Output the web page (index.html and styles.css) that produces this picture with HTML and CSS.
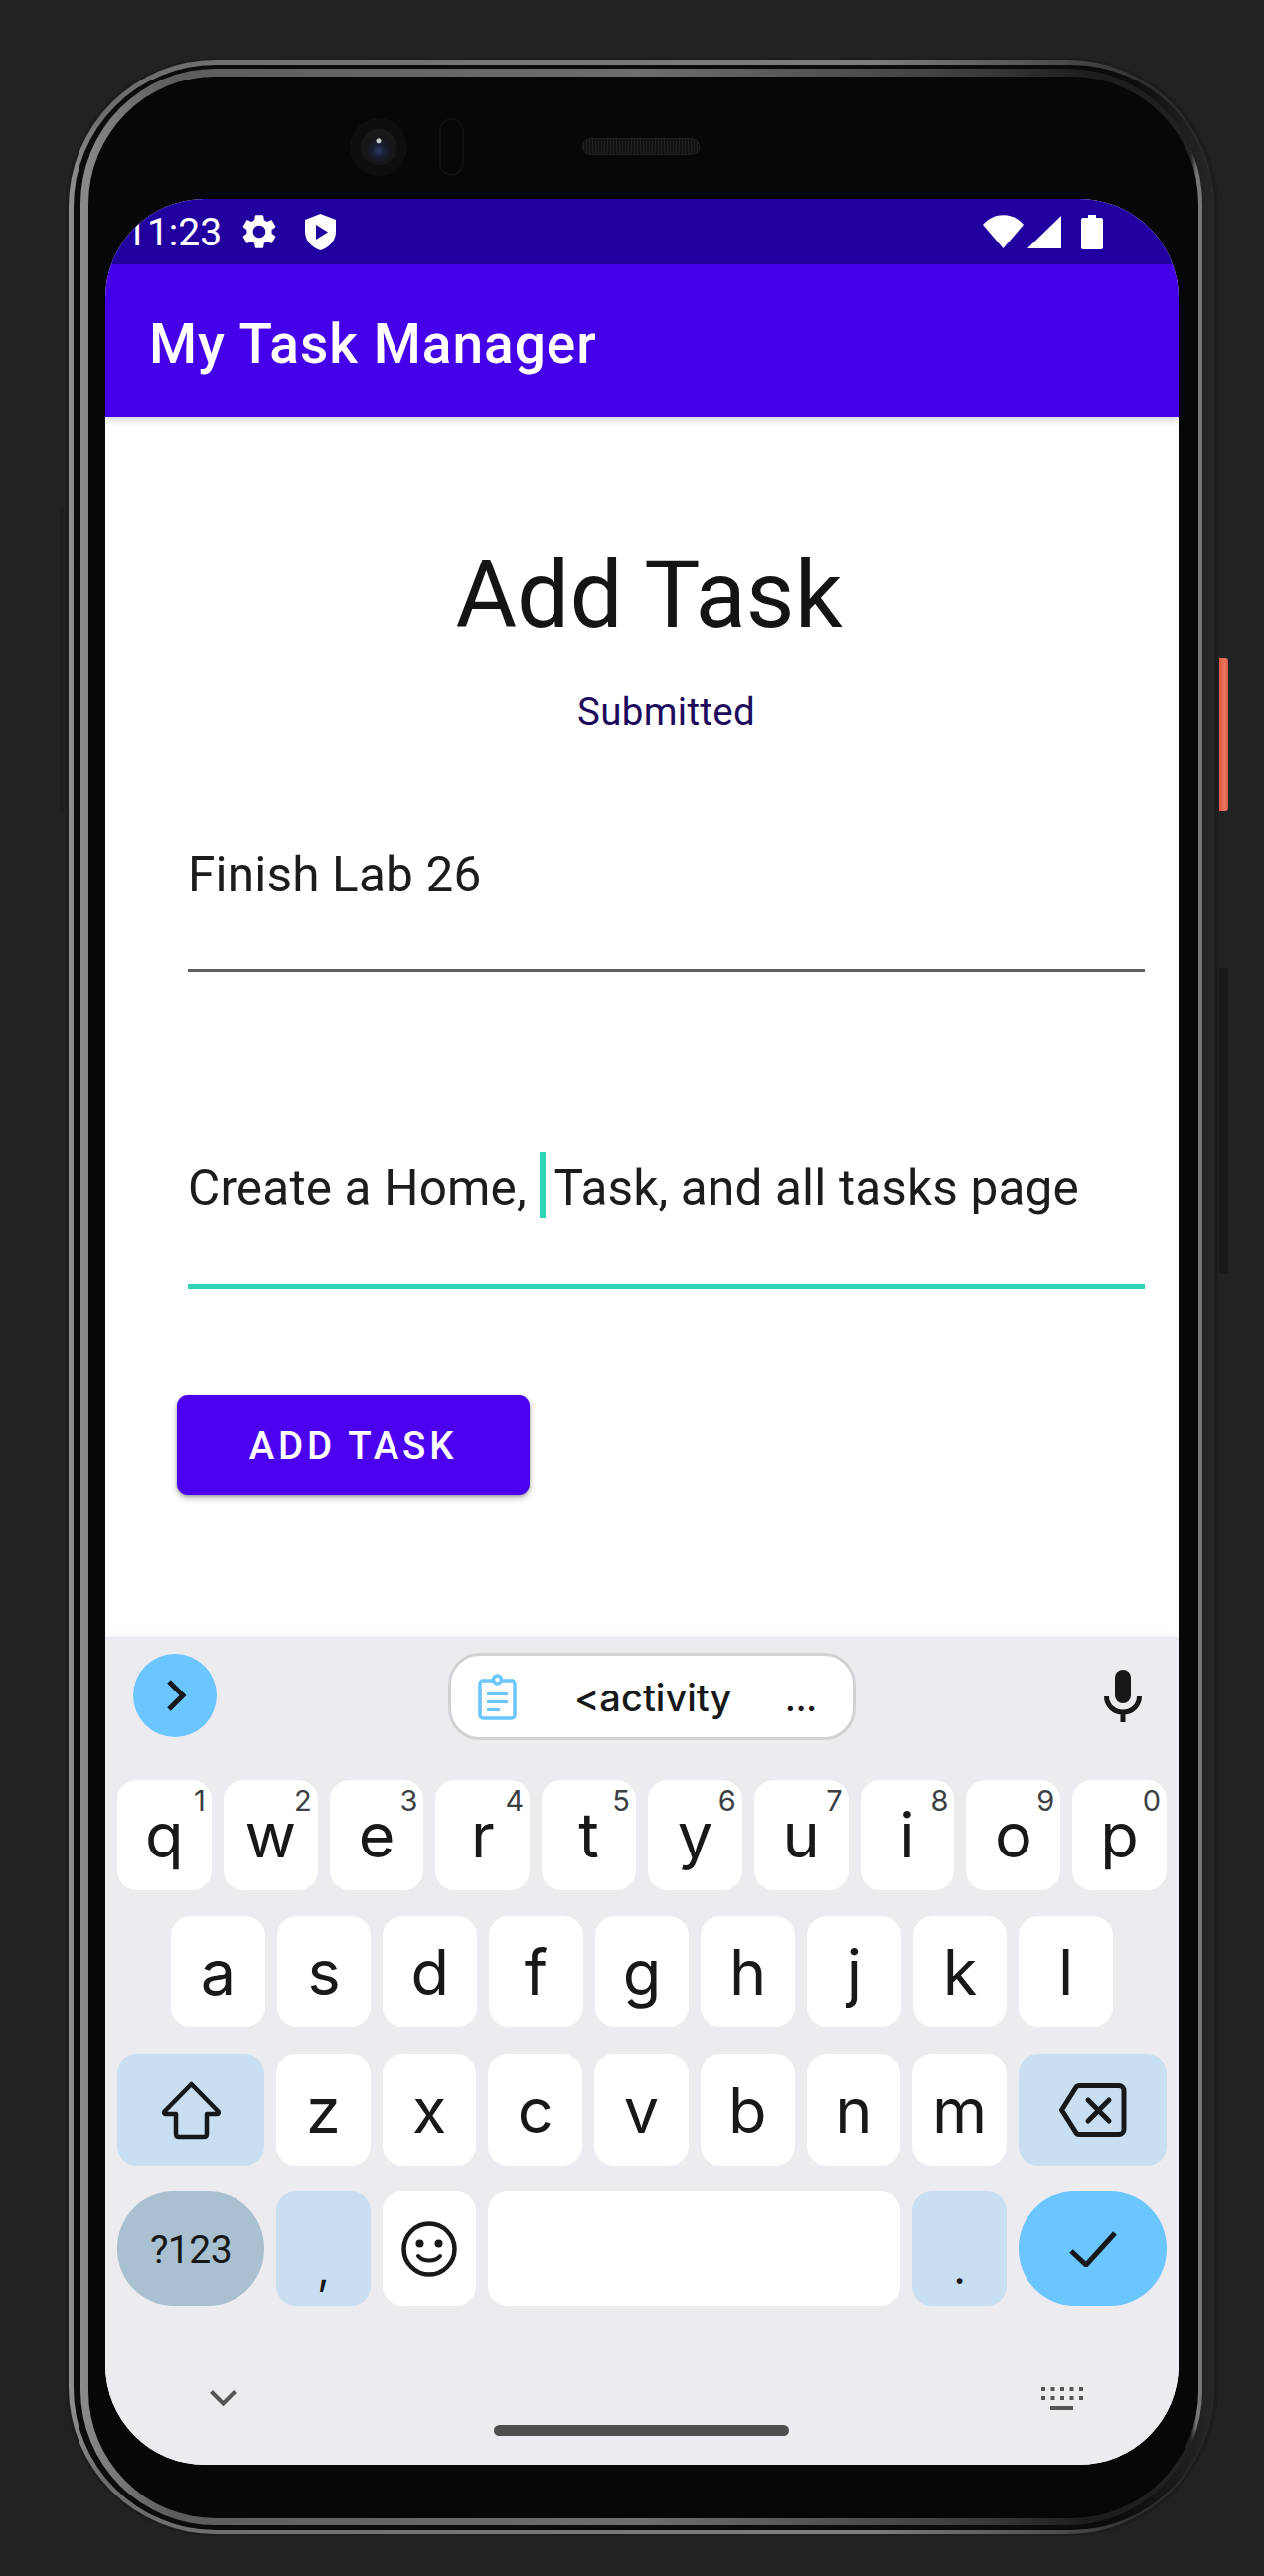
FILE: index.html
```html
<!DOCTYPE html>
<html lang="en">
<head>
<meta charset="utf-8">
<title>My Task Manager</title>
<link rel="stylesheet" href="styles.css">
</head>
<body>
<div class="device">
  <span class="side side-left"></span>
  <span class="side side-power"></span>
  <span class="side side-volume"></span>
  <div class="rim-outer">
    <div class="rim-gap">
      <div class="rim-inner">
        <div class="bezel">
          <div class="bezel-top">
            <div class="camera"><span class="lens"></span></div>
            <div class="sensor"></div>
            <div class="speaker"></div>
          </div>
          <div class="screen">
            <div class="statusbar">
              <span class="time">11:23</span>
              <svg class="ic-gear" viewBox="0 0 24 24"><path fill="#fff" d="M19.14 12.94c.04-.3.06-.61.06-.94 0-.32-.02-.64-.07-.94l2.03-1.58c.18-.14.23-.41.12-.61l-1.92-3.32c-.12-.22-.37-.29-.59-.22l-2.39.96c-.5-.38-1.03-.7-1.62-.94l-.36-2.54c-.04-.24-.24-.41-.48-.41h-3.84c-.24 0-.43.17-.47.41l-.36 2.54c-.59.24-1.13.57-1.62.94l-2.39-.96c-.22-.08-.47 0-.59.22L2.74 8.87c-.12.21-.08.47.12.61l2.03 1.58c-.05.3-.09.63-.09.94s.02.64.07.94l-2.03 1.58c-.18.14-.23.41-.12.61l1.92 3.32c.12.22.37.29.59.22l2.39-.96c.5.38 1.03.7 1.62.94l.36 2.54c.05.24.24.41.48.41h3.84c.24 0 .44-.17.47-.41l.36-2.54c.59-.24 1.13-.56 1.62-.94l2.39.96c.22.08.47 0 .59-.22l1.92-3.32c.12-.22.07-.47-.12-.61l-2.01-1.58zM12 15.6c-1.98 0-3.6-1.62-3.6-3.6s1.62-3.6 3.6-3.6 3.6 1.62 3.6 3.6-1.62 3.6-3.6 3.6z"/></svg>
              <svg class="ic-shield" viewBox="0 0 31 37"><path fill="#fff" fill-rule="evenodd" d="M15.5 0 31 6v12c0 9-6.5 16-15.5 19C6.500 34 0 27 0 18V6zM11 11v15l12-7.500z"/></svg>
              <svg class="ic-wifi" viewBox="0 0 41 34"><path fill="#fff" d="M0 10C11-3 30-3 41 10L20.500 34z"/></svg>
              <svg class="ic-signal" viewBox="0 0 34 33"><path fill="#fff" d="M34 0v33H0z"/></svg>
              <svg class="ic-battery" viewBox="0 0 22 35"><path fill="#fff" d="M7 0h8v3h5a2 2 0 0 1 2 2v28a2 2 0 0 1-2 2H2a2 2 0 0 1-2-2V5a2 2 0 0 1 2-2h5z"/></svg>
            </div>
            <header class="appbar">My Task Manager</header>
            <main class="content">
              <h1 class="page-title">Add Task</h1>
              <p class="status-msg">Submitted</p>
              <div class="field field-idle">Finish Lab 26</div>
              <div class="field field-focus">Create a Home, <span class="caret"></span>Task, and all tasks page</div>
              <button class="add-btn">ADD TASK</button>
            </main>
            <section class="keyboard">
              <div class="kb-tools">
                <div class="tool-circle">
                  <svg class="ic-next" viewBox="0 0 20 32"><path fill="none" stroke="#16181a" stroke-width="5" d="M2 2l14 14L2 30"/></svg>
                </div>
                <div class="clip-chip">
                  <svg class="ic-clip" viewBox="0 0 39 47"><g fill="none" stroke="#6bc5ff" stroke-width="3.500"><rect x="2" y="7" width="35" height="38" rx="3"/><circle cx="19.500" cy="6" r="4" fill="#fff"/></g><path fill="#6bc5ff" d="M9 19h21v3H9zM9 27h21v3H9zM9 35h13v3H9z"/></svg>
                  <span class="clip-text">&lt;activity</span>
                  <span class="clip-more">...</span>
                </div>
                <svg class="ic-mic" viewBox="0 0 38 53"><rect x="11" y="0" width="16" height="34" rx="8" fill="#16181a"/><path fill="none" stroke="#16181a" stroke-width="5" d="M2.500 27c0 9 7 16 16.500 16s16.500-7 16.500-16M19 43v10"/></svg>
              </div>
              <div class="kb-row r1">
                <div class="key">q<sup>1</sup></div><div class="key">w<sup>2</sup></div><div class="key">e<sup>3</sup></div><div class="key">r<sup>4</sup></div><div class="key">t<sup>5</sup></div><div class="key">y<sup>6</sup></div><div class="key">u<sup>7</sup></div><div class="key">i<sup>8</sup></div><div class="key">o<sup>9</sup></div><div class="key">p<sup>0</sup></div>
              </div>
              <div class="kb-row r2">
                <div class="key">a</div><div class="key">s</div><div class="key">d</div><div class="key">f</div><div class="key">g</div><div class="key">h</div><div class="key">j</div><div class="key">k</div><div class="key">l</div>
              </div>
              <div class="kb-row r3">
                <div class="key mod wide">
                  <svg class="ic-shift" viewBox="0 0 61 59"><path fill="none" stroke="#16181a" stroke-width="4.500" stroke-linejoin="round" d="M30.500 3 3.500 30.500q-1 2 1 2.500H15v20q0 3 3 3h25q3 0 3-3V33h10.500q2-.5 1-2.500z"/></svg>
                </div>
                <div class="key">z</div><div class="key">x</div><div class="key">c</div><div class="key">v</div><div class="key">b</div><div class="key">n</div><div class="key">m</div>
                <div class="key mod wide">
                  <svg class="ic-back" viewBox="0 0 68 54"><path fill="none" stroke="#16181a" stroke-width="5" stroke-linejoin="round" d="M2.500 27 17 4q1-1.500 3-1.500h40a5 5 0 0 1 5 5v39a5 5 0 0 1-5 5H20q-2 0-3-1.500z"/><path fill="none" stroke="#16181a" stroke-width="5" stroke-linecap="round" d="M29 17l21 21M50 17 29 38"/></svg>
                </div>
              </div>
              <div class="kb-row r4">
                <div class="key sym wide">?123</div>
                <div class="key mod low">,</div>
                <div class="key">
                  <svg class="ic-emoji" viewBox="0 0 56 56"><circle cx="28" cy="28" r="25.500" fill="none" stroke="#16181a" stroke-width="4.500"/><circle cx="18.500" cy="22.500" r="4" fill="#16181a"/><circle cx="37.500" cy="22.500" r="4" fill="#16181a"/><path fill="none" stroke="#16181a" stroke-width="4" stroke-linecap="round" d="M17 35c5 6 17 6 22 0"/></svg>
                </div>
                <div class="key space"></div>
                <div class="key mod low">.</div>
                <div class="key done wide">
                  <svg class="ic-check" viewBox="0 0 48 36"><path fill="none" stroke="#16181a" stroke-width="5" d="M2 20l15 14L46 2"/></svg>
                </div>
              </div>
              <div class="kb-nav">
                <svg class="ic-down" viewBox="0 0 27 16"><path fill="none" stroke="#555" stroke-width="4" d="M1.500 1.500 13.500 13.500l12-12"/></svg>
                <span class="home-pill"></span>
                <svg class="ic-kbd" viewBox="0 0 42 23"><path fill="#555" d="M0 0h4v4H0zM9.500 0h4v4h-4zM19 0h4v4h-4zM28.500 0h4v4h-4zM38 0h4v4h-4zM0 9h4v4H0zM9.500 9h4v4h-4zM19 9h4v4h-4zM28.500 9h4v4h-4zM38 9h4v4h-4zM9 19h23v4H9z"/></svg>
              </div>
            </section>
          </div>
        </div>
      </div>
    </div>
  </div>
</div>
</body>
</html>
```

FILE: styles.css
```css
* { box-sizing: border-box; }
html, body { margin: 0; padding: 0; }
body {
  width: 1272px;
  height: 2592px;
  background: #212224;
  overflow: hidden;
  padding: 58px 0 0 66px;
  font-family: Roboto, "Liberation Sans", sans-serif;
}

/* ---------- device frame ---------- */
.device {
  position: relative;
  width: 1160px;
  height: 2494px;
  border-radius: 150px;
  background: #1c1d1f;
  padding: 2px 4px 2px 3px;
}
.side { position: absolute; display: block; }
.side-left { left: -6px; top: 455px; width: 5px; height: 305px; background: #1d1e20; border-radius: 2px 0 0 2px; }
.side-power {
  left: 1161px; top: 604px; width: 9px; height: 154px;
  background: linear-gradient(90deg, #e2553f, #e9775c 60%, #d85a44);
  border-radius: 0 3px 3px 0;
}
.side-volume { left: 1161px; top: 916px; width: 9px; height: 308px; background: #19191a; border-radius: 0 3px 3px 0; }

.rim-outer {
  height: 100%;
  border-radius: 148px;
  padding: 5px 1px 4px 5px;
  background: linear-gradient(90deg, #8e8f90 0, #6c6d6e 3%, #7c7d7e 70%, #555 84%, #2e2f31 94%, #2a2b2d 100%);
}
.rim-gap {
  height: 100%;
  border-radius: 143px;
  padding: 4px 11px 5px 7px;
  background: linear-gradient(90deg, #0b0b0c, #0b0b0c 92%, #202123 98.500%, #26272a);
}
.rim-inner {
  height: 100%;
  border-radius: 136px;
  padding: 8px 4px 7px 8px;
  background: linear-gradient(90deg, #8a8b8c 0, #5c5d5e 8%, #6d6e6f 50%, #3a3b3c 80%, #1c1c1d 90%, #222 99%, #777 99.500%);
}
.bezel {
  height: 100%;
  border-radius: 128px;
  background: #070708;
  padding: 0 0 54px 17px;
  display: flex;
  flex-direction: column;
}
.bezel-top {
  height: 123px;
  flex: none;
  display: flex;
  align-items: flex-start;
  padding: 42px 0 0 246px;
}
.camera {
  width: 58px; height: 58px; border-radius: 50%;
  background: #0e0e10;
  display: flex; align-items: center; justify-content: center;
}
.lens {
  width: 36px; height: 36px; border-radius: 50%;
  background:
    radial-gradient(circle at 50% 33%, #c8c8c8 0, #c8c8c8 2px, transparent 3px),
    radial-gradient(circle at 50% 60%, #2c3a66 0, #1a1f33 22%, #16161a 45%, #1a1a1c 75%);
}
.sensor {
  width: 25px; height: 58px; margin-left: 32px; border-radius: 13px;
  border: 2px solid #101011;
}
.speaker {
  width: 118px; height: 17px; margin: 20px 0 0 119px; border-radius: 8px;
  border: 1px solid #1f1f20;
  background: repeating-linear-gradient(90deg, #202021 0 1px, #121213 1px 3px);
}

/* ---------- screen ---------- */
.screen {
  flex: 1;
  width: 1080px;
  border-radius: 100px;
  overflow: hidden;
  background: #fff;
  display: flex;
  flex-direction: column;
}
.statusbar {
  height: 66px;
  flex: none;
  background: #2200a0;
  color: #fff;
  display: flex;
  align-items: center;
  padding: 0 76px 0 20px;
}
.time { font-size: 39px; font-weight: 400; line-height: 66px; margin-top: 2px; }
.ic-gear { width: 42px; height: 42px; margin-left: 17px; }
.ic-shield { width: 31px; height: 37px; margin-left: 25px; }
.ic-wifi { width: 41px; height: 34px; margin-left: auto; }
.ic-signal { width: 34px; height: 33px; margin-left: 4px; }
.ic-battery { width: 22px; height: 35px; margin-left: 20px; }

.appbar {
  height: 154px;
  flex: none;
  background: #4400e8;
  color: #fff;
  font-size: 55px;
  font-weight: 500;
  letter-spacing: 1px;
  line-height: 154px;
  padding: 3px 0 0 44px;
  box-shadow: 0 3px 8px rgba(0,0,0,.18);
  position: relative;
}

.content {
  flex: 1;
  padding: 0 34px 0 83px;
  display: flex;
  flex-direction: column;
  align-items: stretch;
}
.page-title {
  margin: 119px 0 0 -83px;
  width: 1094px;
  text-align: center;
  font-size: 94.500px;
  font-weight: 400;
  line-height: 120px;
  color: #141414;
}
.status-msg {
  margin: 29px 0 0;
  text-align: center;
  font-size: 38.500px;
  letter-spacing: .3px;
  line-height: 56px;
  color: #1e0a5c;
}
.field {
  color: #1c1c1c;
  font-size: 49.500px;
  letter-spacing: .17px;
  line-height: 60px;
  white-space: nowrap;
}
.field-idle {
  margin-top: 86px;
  height: 148px;
  padding-top: 20px;
  border-bottom: 3px solid #5f5f5f;
}
.field-focus {
  margin-top: 161px;
  height: 158px;
  padding-top: 20px;
  border-bottom: 5px solid #30d5b8;
}
.caret {
  display: inline-block;
  width: 6px;
  height: 67px;
  background: #30d5b8;
  vertical-align: -14px;
  margin: 0 8px 0 1px;
}
.add-btn {
  width: 355px;
  height: 100px;
  margin: 107px 0 0 -11px;
  border: 0;
  border-radius: 11px;
  background: #4b00f0;
  color: #fff;
  font: 500 38.500px/100px Roboto, sans-serif;
  letter-spacing: 3.800px;
  box-shadow: 0 3px 6px rgba(0,0,0,.28), 0 1px 3px rgba(0,0,0,.2);
}

/* ---------- keyboard ---------- */
.keyboard {
  height: 833px;
  flex: none;
  background: #ebebf0;
  padding: 0 12px;
  box-shadow: 0 -2px 6px rgba(0,0,0,.06);
  position: relative;
  display: flex;
  flex-direction: column;
  font-family: Inter, Roboto, sans-serif;
  color: #16181a;
}
.kb-tools {
  height: 144px;
  flex: none;
  display: flex;
  align-items: flex-start;
  padding: 17px 25px 0 16px;
}
.tool-circle {
  width: 84px; height: 84px; border-radius: 50%;
  background: #6bc5ff;
  display: flex; align-items: center; justify-content: center;
  padding-left: 3px;
}
.ic-next { width: 20px; height: 32px; }
.clip-chip {
  width: 410px; height: 88px;
  margin: -1px 0 0 233px;
  background: #fff;
  border: 3px solid #d2d2d5;
  border-radius: 32px;
  display: flex;
  align-items: center;
  padding: 0 36px 0 27px;
}
.ic-clip { width: 39px; height: 47px; }
.clip-text { font-size: 38px; font-weight: 500; margin-left: 58px; margin-top: 2px; }
.clip-more { font-size: 32px; margin-left: auto; font-weight: 700; margin-top: 6px; }
.ic-mic { width: 38px; height: 53px; margin: 16px 0 0 auto; }

.kb-row { display: flex; gap: 12px; flex: none; margin-bottom: 26px; }
.r1 { height: 111px; }
.r2 { height: 112px; padding: 0 54px; }
.r3 { height: 112px; margin-top: 1px; }
.r4 { height: 115px; margin-bottom: 0; }

.key {
  flex: 1 1 0;
  min-width: 0;
  position: relative;
  background: #fff;
  border-radius: 20px;
  display: flex;
  align-items: center;
  justify-content: center;
  font-size: 63px;
  line-height: 1;
}
.key sup {
  position: absolute;
  top: 4px;
  right: 6px;
  font-size: 29px;
  line-height: 34px;
  color: #3c3f43;
  vertical-align: baseline;
}
.key.mod { background: #c8dff2; }
.key.wide { flex: 0 0 148px; }
.key.low { flex: 0 0 95px; align-items: flex-end; font-size: 44px; padding-bottom: 16px; line-height: 1; }
.r4 .key:nth-child(3) { flex: 0 0 94px; }
.key.space { flex: 1 1 0; }
.key.sym { background: #a8c0cf; border-radius: 57px; font-family: Roboto, sans-serif; font-size: 39px; letter-spacing: -.5px; padding-top: 3px; }
.key.done { background: #6bc5ff; border-radius: 57px; flex-basis: 149px; }
.r3 .key.wide:last-child { flex-basis: 149px; }

.ic-shift { width: 61px; height: 59px; }
.ic-back { width: 68px; height: 54px; }
.ic-emoji { width: 56px; height: 56px; }
.ic-check { width: 48px; height: 36px; }

.kb-nav {
  flex: 1;
  display: flex;
  align-items: flex-start;
  padding: 0 84px 0 93px;
}
.ic-down { width: 27px; height: 16px; margin-top: 85px; }
.home-pill { width: 297px; height: 11px; margin: 120px 0 0 259px; border-radius: 6px; background: #4f4f4f; }
.ic-kbd { width: 42px; height: 23px; margin: 82px 0 0 auto; }
```
